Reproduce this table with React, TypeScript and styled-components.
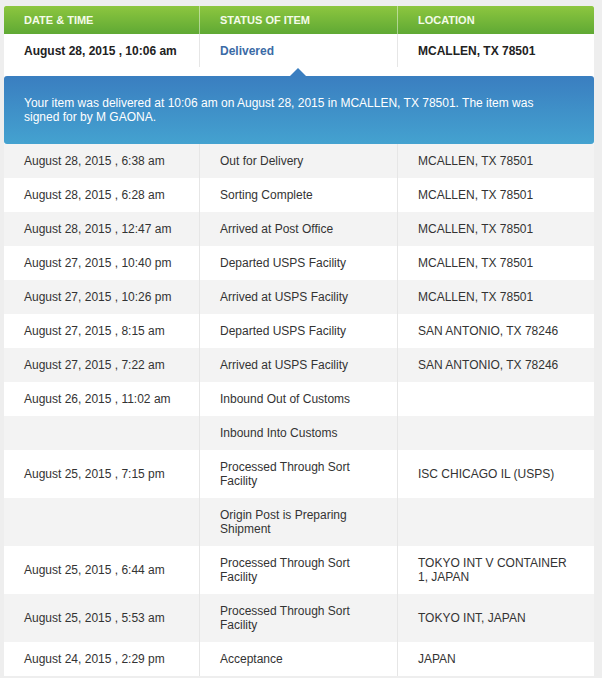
import React from "react";
import styled, { createGlobalStyle } from "styled-components";

const Global = createGlobalStyle`
  html, body { margin: 0; padding: 0; background: #eeeeee; }
  body { font-family: "Liberation Sans", Arial, sans-serif; font-size: 12px; color: #333; }
`;

const Page = styled.div`
  padding: 6px 8px 2px 4px;
`;

const Table = styled.div`
  width: 590px;
  background: #fff;
`;

const Row = styled.div<{ $shade?: boolean }>`
  display: grid;
  grid-template-columns: 195px 198px 197px;
  background: ${(p) => (p.$shade ? "#f3f3f3" : "#ffffff")};
`;

const HeadRow = styled(Row)`
  background: linear-gradient(#8dc63f, #5fa934);
  border-radius: 2px 2px 0 0;
`;

const HeadCell = styled.div`
  padding: 7px 20px 7px 20px;
  line-height: 14px;
  font-size: 11px;
  font-weight: bold;
  color: #f4fbe9;
  text-transform: uppercase;
  & + & { border-left: 1px solid rgba(255, 255, 255, 0.45); }
`;

const Cell = styled.div<{ $bold?: boolean }>`
  display: flex;
  align-items: center;
  padding: 10px 18px 10px 20px;
  line-height: 14px;
  min-height: 14px;
  font-weight: ${(p) => (p.$bold ? "bold" : "normal")};
  color: ${(p) => (p.$bold ? "#222" : "#333")};
  & + & { border-left: 1px solid #e6e6e6; }
`;

const TopCell = styled(Cell)`
  padding-top: 10px;
  padding-bottom: 9px;
`;

const StatusLink = styled.span`
  color: #3b6ba6;
  font-weight: bold;
`;

const BannerWrap = styled.div`
  background: #fff;
  padding-top: 9px;
`;

const Banner = styled.div`
  position: relative;
  background: linear-gradient(#3a7ec0, #44a2d0);
  border-radius: 3px;
  color: #fff;
  line-height: 14px;
  padding: 20px 40px 20px 20px;
  &::before {
    content: "";
    position: absolute;
    top: -8px;
    left: 286px;
    border-left: 8px solid transparent;
    border-right: 8px solid transparent;
    border-bottom: 8px solid #3a7ec0;
  }
`;

type Ev = { d: string; s: string; l: string };

const events: Ev[] = [
  { d: "August 28, 2015 , 6:38 am", s: "Out for Delivery", l: "MCALLEN, TX 78501" },
  { d: "August 28, 2015 , 6:28 am", s: "Sorting Complete", l: "MCALLEN, TX 78501" },
  { d: "August 28, 2015 , 12:47 am", s: "Arrived at Post Office", l: "MCALLEN, TX 78501" },
  { d: "August 27, 2015 , 10:40 pm", s: "Departed USPS Facility", l: "MCALLEN, TX 78501" },
  { d: "August 27, 2015 , 10:26 pm", s: "Arrived at USPS Facility", l: "MCALLEN, TX 78501" },
  { d: "August 27, 2015 , 8:15 am", s: "Departed USPS Facility", l: "SAN ANTONIO, TX 78246" },
  { d: "August 27, 2015 , 7:22 am", s: "Arrived at USPS Facility", l: "SAN ANTONIO, TX 78246" },
  { d: "August 26, 2015 , 11:02 am", s: "Inbound Out of Customs", l: "" },
  { d: "", s: "Inbound Into Customs", l: "" },
  { d: "August 25, 2015 , 7:15 pm", s: "Processed Through Sort Facility", l: "ISC CHICAGO IL (USPS)" },
  { d: "", s: "Origin Post is Preparing Shipment", l: "" },
  { d: "August 25, 2015 , 6:44 am", s: "Processed Through Sort Facility", l: "TOKYO INT V CONTAINER 1, JAPAN" },
  { d: "August 25, 2015 , 5:53 am", s: "Processed Through Sort Facility", l: "TOKYO INT, JAPAN" },
  { d: "August 24, 2015 , 2:29 pm", s: "Acceptance", l: "JAPAN" },
];

export default function App() {
  return (
    <>
      <Global />
      <Page>
        <Table>
          <HeadRow>
            <HeadCell>Date &amp; Time</HeadCell>
            <HeadCell>Status of Item</HeadCell>
            <HeadCell>Location</HeadCell>
          </HeadRow>
          <Row>
            <TopCell $bold>August 28, 2015 , 10:06 am</TopCell>
            <TopCell>
              <StatusLink>Delivered</StatusLink>
            </TopCell>
            <TopCell $bold>MCALLEN, TX 78501</TopCell>
          </Row>
          <BannerWrap>
            <Banner>
              Your item was delivered at 10:06 am on August 28, 2015 in MCALLEN, TX 78501. The item was
              signed for by M GAONA.
            </Banner>
          </BannerWrap>
          {events.map((e, i) => (
            <Row key={i} $shade={i % 2 === 0}>
              <Cell>{e.d}</Cell>
              <Cell>{e.s}</Cell>
              <Cell>{e.l}</Cell>
            </Row>
          ))}
        </Table>
      </Page>
    </>
  );
}
